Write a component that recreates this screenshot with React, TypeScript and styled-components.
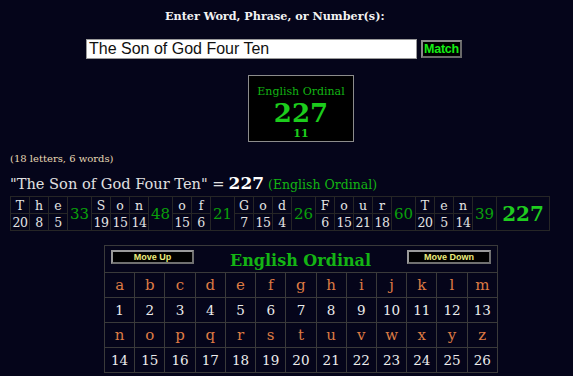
import React from "react";
import styled, { createGlobalStyle } from "styled-components";

const Global = createGlobalStyle`
  html, body { margin: 0; padding: 0; background: #05051a; }
  body { font-family: "DejaVu Serif", serif; color: #e8e8e8; }
`;

const Page = styled.div`
  width: 573px;
  height: 376px;
  overflow: hidden;
  display: flex;
  flex-direction: column;
`;

const Title = styled.div`
  margin-top: 9px;
  margin-left: 165px;
  font-family: "DejaVu Serif", serif;
  font-weight: bold;
  font-size: 11.2px;
  color: #f2f2f2;
  line-height: 15px;
`;

const InputRow = styled.div`
  display: flex;
  align-items: center;
  gap: 4px;
  margin-top: 15px;
  margin-left: 86px;
`;

const TextBox = styled.div`
  box-sizing: border-box;
  width: 331px;
  height: 20px;
  background: #fff;
  border: 1px solid #9a9a9a;
  font-family: "Liberation Sans", Arial, sans-serif;
  font-size: 16px;
  line-height: 18px;
  color: #111;
  padding-left: 2px;
`;

const MatchButton = styled.div`
  box-sizing: border-box;
  width: 41px;
  height: 18px;
  background: #000;
  border: 2px solid #8a8a8a;
  border-right-color: #6a6a6a;
  border-bottom-color: #6a6a6a;
  font-family: "Liberation Sans", Arial, sans-serif;
  font-weight: bold;
  font-size: 12.5px;
  line-height: 14px;
  color: #14ee14;
  text-align: center;
  letter-spacing: -0.2px;
`;

const ResultBox = styled.div`
  box-sizing: border-box;
  margin-top: 16px;
  margin-left: 248px;
  width: 106px;
  height: 67px;
  border: 1px solid #8c8c8c;
  background: #000;
  display: flex;
  flex-direction: column;
  align-items: center;
  padding-top: 9px;
`;

const BoxLabel = styled.div`
  font-size: 11px;
  line-height: 13px;
  color: #12b412;
`;

const BoxValue = styled.div`
  font-size: 26px;
  font-weight: bold;
  line-height: 30px;
  color: #1ccc1c;
`;

const BoxSub = styled.div`
  font-size: 11px;
  font-weight: bold;
  line-height: 11px;
  color: #1ccc1c;
`;

const Count = styled.div`
  margin-top: 10px;
  margin-left: 10px;
  font-size: 10px;
  line-height: 13px;
  color: #e6d8b4;
`;

const Phrase = styled.div`
  margin-top: 9px;
  margin-left: 10px;
  font-size: 14.6px;
  line-height: 19px;
  color: #e0e0e0;
  display: flex;
  align-items: baseline;
  white-space: nowrap;
`;

const PhraseTotal = styled.span`
  font-weight: bold;
  font-size: 17px;
  color: #fff;
  margin-left: 4px;
`;

const PhraseCipher = styled.span`
  font-size: 12.5px;
  color: #13b413;
  margin-left: 4px;
`;

const BreakTable = styled.table`
  margin-top: 2px;
  margin-left: 10px;
  border-collapse: collapse;
  border: 1px solid #2a2a2a;
  table-layout: fixed;
  width: 539px;
`;

const LetterCell = styled.td<{ $row: "top" | "bottom" }>`
  box-sizing: border-box;
  width: 19px;
  height: 17px;
  padding: 0;
  border: 1px solid #262626;
  text-align: center;
  font-size: 12.5px;
  line-height: 15px;
  color: #e4e4e4;
  white-space: nowrap;
  overflow: visible;
  letter-spacing: ${(p) => (p.$row === "bottom" ? "-0.5px" : "0")};
`;

const SumCell = styled.td`
  box-sizing: border-box;
  width: 24px;
  padding: 0;
  border: 1px solid #262626;
  text-align: center;
  font-size: 15px;
  color: #0aa00a;
`;

const TotalCell = styled.td`
  box-sizing: border-box;
  width: 53px;
  padding: 0;
  border: 1px solid #262626;
  text-align: center;
  font-size: 20px;
  font-weight: bold;
  color: #1fcc1f;
`;

const Chart = styled.table`
  margin-top: 14px;
  margin-left: 104px;
  border-collapse: collapse;
  border: 1px solid #3a3a3a;
  width: 394px;
  table-layout: fixed;
`;

const HeaderCell = styled.td`
  box-sizing: border-box;
  height: 27px;
  padding: 0 6px;
  border: 1px solid #3a3a3a;
`;

const HeaderBar = styled.div`
  display: flex;
  align-items: center;
  justify-content: space-between;
`;

const MoveButton = styled.div<{ $w: number }>`
  box-sizing: border-box;
  width: ${(p) => p.$w}px;
  height: 14px;
  background: #000;
  border: 2px solid #9a9a9a;
  border-right-color: #707070;
  border-bottom-color: #707070;
  font-family: "Liberation Sans", Arial, sans-serif;
  font-weight: bold;
  font-size: 9px;
  line-height: 10px;
  color: #ecec7c;
  text-align: center;
  margin-top: -5px;
`;

const ChartTitle = styled.div`
  font-size: 16px;
  font-weight: bold;
  color: #14b414;
  margin-top: 2px;
`;

const ChartCell = styled.td<{ $kind: "letter" | "num" }>`
  box-sizing: border-box;
  width: 30px;
  height: 25px;
  padding: 0;
  border: 1px solid #3a3a3a;
  text-align: center;
  line-height: 18px;
  font-size: ${(p) => (p.$kind === "letter" ? "15px" : "13.5px")};
  color: ${(p) => (p.$kind === "letter" ? "#dd7b44" : "#ececec")};
`;

const words = ["The", "Son", "of", "God", "Four", "Ten"];
const ord = (c: string) => c.toLowerCase().charCodeAt(0) - 96;

const alpha = "abcdefghijklmnopqrstuvwxyz".split("");

export default function App() {
  return (
    <Page>
      <Global />
      <Title>Enter Word, Phrase, or Number(s):</Title>
      <InputRow>
        <TextBox>The Son of God Four Ten</TextBox>
        <MatchButton>Match</MatchButton>
      </InputRow>
      <ResultBox>
        <BoxLabel>English Ordinal</BoxLabel>
        <BoxValue>227</BoxValue>
        <BoxSub>11</BoxSub>
      </ResultBox>
      <Count>(18 letters, 6 words)</Count>
      <Phrase>
        "The Son of God Four Ten" =<PhraseTotal>227</PhraseTotal>
        <PhraseCipher>(English Ordinal)</PhraseCipher>
      </Phrase>
      <BreakTable>
        <tbody>
          <tr>
            {words.map((w) => (
              <React.Fragment key={w}>
                {w.split("").map((c, i) => (
                  <LetterCell $row="top" key={i}>
                    {c}
                  </LetterCell>
                ))}
                <SumCell rowSpan={2}>
                  {w.split("").reduce((s, c) => s + ord(c), 0)}
                </SumCell>
              </React.Fragment>
            ))}
            <TotalCell rowSpan={2}>227</TotalCell>
          </tr>
          <tr>
            {words.map((w) =>
              w.split("").map((c, i) => (
                <LetterCell $row="bottom" key={w + i}>
                  {ord(c)}
                </LetterCell>
              ))
            )}
          </tr>
        </tbody>
      </BreakTable>
      <Chart>
        <tbody>
          <tr>
            <HeaderCell colSpan={13}>
              <HeaderBar>
                <MoveButton $w={83}>Move Up</MoveButton>
                <ChartTitle>English Ordinal</ChartTitle>
                <MoveButton $w={84}>Move Down</MoveButton>
              </HeaderBar>
            </HeaderCell>
          </tr>
          {[0, 13].map((start) => (
            <React.Fragment key={start}>
              <tr>
                {alpha.slice(start, start + 13).map((c) => (
                  <ChartCell $kind="letter" key={c}>
                    {c}
                  </ChartCell>
                ))}
              </tr>
              <tr>
                {alpha.slice(start, start + 13).map((c) => (
                  <ChartCell $kind="num" key={c}>
                    {ord(c)}
                  </ChartCell>
                ))}
              </tr>
            </React.Fragment>
          ))}
        </tbody>
      </Chart>
    </Page>
  );
}
